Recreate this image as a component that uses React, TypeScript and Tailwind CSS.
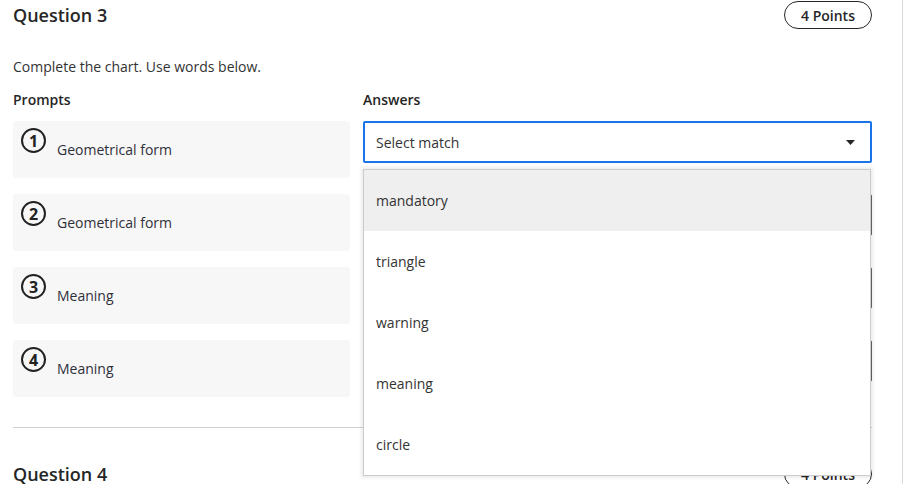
import React from "react";

const prompts = [
  { n: 1, label: "Geometrical form" },
  { n: 2, label: "Geometrical form" },
  { n: 3, label: "Meaning" },
  { n: 4, label: "Meaning" },
];

const options = ["mandatory", "triangle", "warning", "meaning", "circle"];

function Arrow() {
  return (
    <svg width="9" height="5" viewBox="0 0 9 5" className="shrink-0">
      <path d="M0 0 H9 L4.5 5 Z" fill="#262626" />
    </svg>
  );
}

function Header({ title }: { title: string }) {
  return (
    <div className="flex items-center justify-between h-[28px]">
      <h2 className="text-[18px] leading-[24px] font-semibold text-[#262626]">{title}</h2>
      <div className="h-[28px] w-[88px] rounded-full border border-[#262626] flex items-center justify-center text-[14px] font-semibold text-[#262626]">
        4 Points
      </div>
    </div>
  );
}

export default function App() {
  return (
    <div
      className="w-[903px] h-[484px] overflow-hidden bg-white border-r border-[#d9d9d9] text-[#333]"
      style={{ fontFamily: '"Open Sans", "Noto Sans", sans-serif' }}
    >
      <div className="pl-[13px] pr-[30px] pt-[1px]">
        <Header title="Question 3" />
        <p className="mt-[28px] text-[14px] leading-[20px] text-[#333]">Complete the chart. Use words below.</p>
        <div className="mt-[13px] grid grid-cols-[337px_509px] gap-x-[13px]">
          <div className="text-[14px] leading-[20px] font-semibold text-[#262626]">Prompts</div>
          <div className="text-[14px] leading-[20px] font-semibold text-[#262626]">Answers</div>
        </div>
        <div className="mt-[11px] grid grid-cols-[337px_509px] gap-x-[13px]">
          <div className="flex flex-col gap-[16px]">
            {prompts.map((p) => (
              <div key={p.n} className="h-[57px] rounded-[3px] bg-[#f7f7f7] flex items-start pl-[8px] pt-[7px]">
                <div className="w-[25px] h-[25px] rounded-full border-2 border-[#222] flex items-center justify-center text-[16px] font-bold text-[#222] leading-[20px]">
                  {p.n}
                </div>
                <span className="ml-[11px] mt-[12px] text-[14px] leading-[20px] text-[#2f2f3a]">{p.label}</span>
              </div>
            ))}
          </div>
          <div className="relative flex flex-col gap-[16px]">
            {prompts.map((p, i) => (
              <div key={p.n} className="h-[57px]">
                <div
                  className={
                    i === 0
                      ? "h-[42px] border-2 border-[#1a73e8] rounded-[2px] flex items-center justify-between pl-[11px] pr-[15px] bg-white"
                      : "h-[42px] border border-[#666] rounded-[2px] flex items-center justify-between pl-[12px] pr-[16px] bg-white"
                  }
                >
                  <span className="text-[14px] leading-[20px] text-[#333] pt-[1px]">Select match</span>
                  <Arrow />
                </div>
              </div>
            ))}
            <div className="absolute z-10 left-0 top-[48px] w-[508px] border border-[#cccccc] bg-white shadow-[0_0_3px_2px_rgba(0,0,0,0.08)]">
              {options.map((o, i) => (
                <div
                  key={o}
                  className={
                    i === 0
                      ? "h-[61px] flex items-center pl-[12px] bg-[#efefef] text-[14px] text-[#333]"
                      : "h-[61px] flex items-center pl-[12px] bg-white text-[14px] text-[#333]"
                  }
                >
                  {o}
                </div>
              ))}
            </div>
          </div>
        </div>
        <div className="mt-[30px] border-t border-[#cfcfcf]" />
        <div className="mt-[32px]">
          <Header title="Question 4" />
        </div>
      </div>
    </div>
  );
}
